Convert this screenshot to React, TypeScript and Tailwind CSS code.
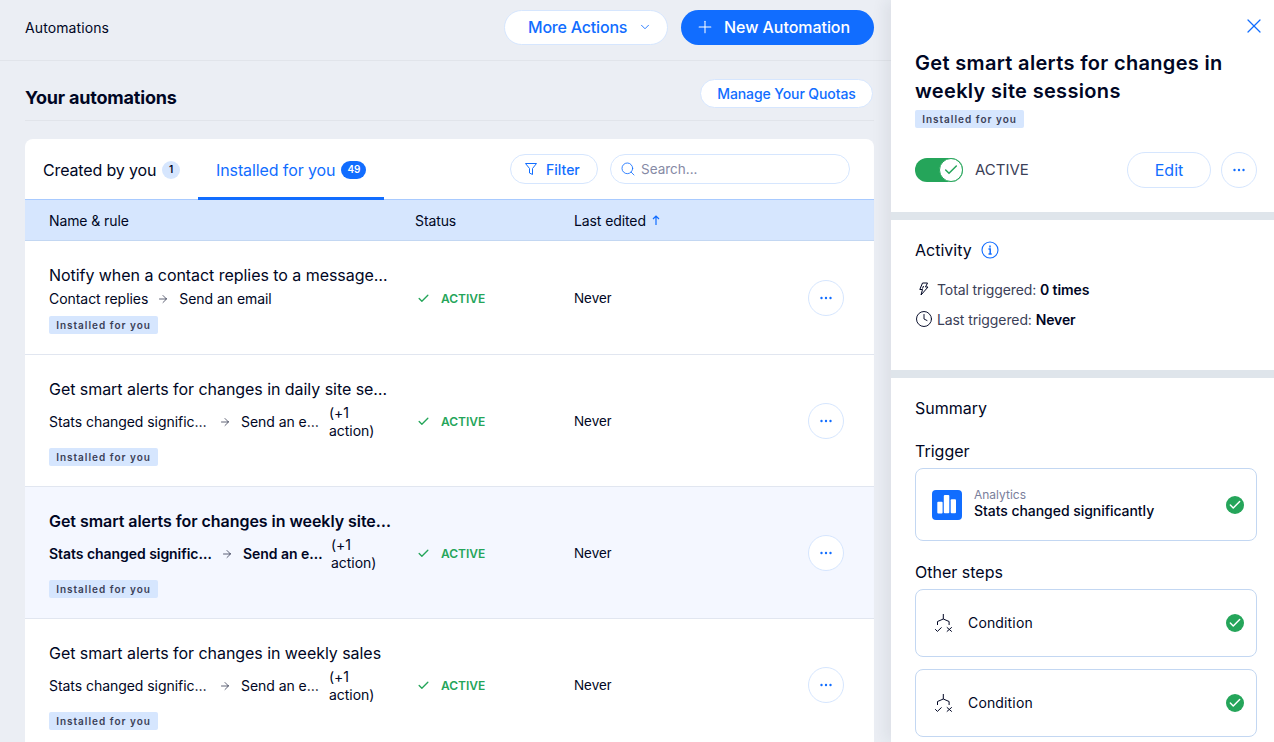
import { ArrowRight, Check, ChevronDown, Clock, Plus, Search, X } from "lucide-react";

const rows = [
  { title: "Notify when a contact replies to a message…", from: "Contact replies", to: "Send an email", extra: false, active: false },
  { title: "Get smart alerts for changes in daily site se…", from: "Stats changed signific…", to: "Send an e…", extra: true, active: false },
  { title: "Get smart alerts for changes in weekly site…", from: "Stats changed signific…", to: "Send an e…", extra: true, active: true },
  { title: "Get smart alerts for changes in weekly sales", from: "Stats changed signific…", to: "Send an e…", extra: true, active: false },
];

const Tag = () => (
  <span className="flex h-[18px] w-[109px] items-center justify-center rounded-[2px] bg-[#d6e6fe] text-[10px] font-semibold tracking-[1px] text-[#3b4057]">
    Installed for you
  </span>
);

const Dots = () => (
  <button className="flex h-9 w-9 shrink-0 items-center justify-center rounded-full border border-[#d6e6fe] bg-white">
    <svg width="14" height="4" viewBox="0 0 14 4" fill="#116dff">
      <circle cx="2.5" cy="2" r="1.2" />
      <circle cx="7" cy="2" r="1.2" />
      <circle cx="11.5" cy="2" r="1.2" />
    </svg>
  </button>
);

const GreenCheck = () => (
  <span className="flex h-[18px] w-[18px] shrink-0 items-center justify-center rounded-full bg-[#25a55a]">
    <Check className="h-[14px] w-[14px] text-white" strokeWidth={2.5} />
  </span>
);

const ConditionIcon = () => (
  <svg width="20" height="20" viewBox="0 0 20 20" fill="none" stroke="#000624" strokeWidth="1" className="shrink-0">
    <path d="M9.300 1v5M9.300 6L3.500 8.500V12M9.300 6l5.800 2.500V12" />
    <path d="M1.200 16.200l2.200 2.200 4.200-4M12.800 14.300l5 4.300M17.800 14.300l-5 4.300" />
  </svg>
);

const StepCard = ({ label }: { label: string }) => (
  <div className="flex h-[68px] items-center rounded-lg border border-[#c3d7f2] pl-[18px] pr-[12px]">
    <ConditionIcon />
    <span className="ml-[14px] flex-1 text-sm tracking-[0.15px] text-[#000624]">{label}</span>
    <GreenCheck />
  </div>
);

const App = () => {
  return (
    <div
      className="flex h-[742px] w-[1274px] overflow-hidden bg-[#ebeef4] text-[#000624]"
      style={{ fontFamily: "Inter, 'Noto Sans', sans-serif" }}
    >
      {/* Left column */}
      <div className="flex w-[891px] shrink-0 flex-col">
        <div className="flex h-[61px] shrink-0 items-center justify-between border-b border-[#e1e4ea] pl-[25px] pr-[17px] pb-[6px]">
          <span className="text-[14px] tracking-[0.1px]">Automations</span>
          <div className="flex items-center gap-[13px]">
            <button className="flex h-[35px] w-[164px] items-center gap-[11px] rounded-full border border-[#d6e6fe] bg-white pl-[23px] text-[16px] font-medium tracking-[-0.2px] text-[#116dff]">
              More Actions
              <ChevronDown className="h-[14px] w-[14px]" strokeWidth={1.5} />
            </button>
            <button className="flex h-[35px] w-[193px] items-center gap-[9px] rounded-full bg-[#116dff] pl-[14px] text-[16px] font-medium tracking-[-0.05px] text-white">
              <Plus className="h-[20px] w-[20px]" strokeWidth={1.25} />
              New Automation
            </button>
          </div>
        </div>

        <div className="flex min-h-0 flex-1 flex-col pl-[25px] pr-[17px]">
          <div className="flex h-[60px] shrink-0 items-center justify-between border-b border-[#e1e4ea] pt-[14px]">
            <h2 className="text-[18px] font-bold tracking-[-0.2px]">Your automations</h2>
            <button className="mr-[1px] -mt-[8px] flex h-[29px] w-[173px] items-center justify-center rounded-full border border-[#d6e6fe] bg-white text-[14px] font-medium tracking-[-0.1px] text-[#116dff]">
              Manage Your Quotas
            </button>
          </div>

          <div className="mt-[18px] flex min-h-0 flex-1 flex-col overflow-hidden rounded-t-lg bg-white">
            {/* Tabs */}
            <div className="flex h-[61px] shrink-0 items-stretch border-b border-[#a8caff] pl-[18px] pr-[24px]">
              <div className="flex items-center gap-[6px] pt-[1px]">
                <span className="text-[16px] tracking-[-0.15px]">Created by you</span>
                <span className="flex h-[18px] w-[18px] items-center justify-center rounded-full bg-[#d6e6fe] text-[10px] font-semibold">1</span>
              </div>
              <div className="relative ml-[18px] flex w-[186px] items-center justify-center gap-[6px] pt-[1px]">
                <span className="text-[16px] tracking-[-0.1px] text-[#116dff]">Installed for you</span>
                <span className="flex h-[18px] w-[25px] items-center justify-center rounded-full bg-[#116dff] text-[10px] font-semibold text-white">49</span>
                <span className="absolute -bottom-px left-0 right-0 h-[3px] bg-[#116dff]" />
              </div>
              <div className="ml-auto flex items-center gap-3">
                <button className="flex h-[30px] w-[88px] items-center gap-[8px] rounded-full border border-[#d6e6fe] bg-white pl-[13px] text-[14px] font-medium text-[#116dff]">
                  <svg width="14" height="14" viewBox="0 0 14 14" fill="none" stroke="#116dff" strokeWidth="1">
                    <path d="M1.500 1.500h11l-4 5v6l-3-1.500V6.500z" />
                  </svg>
                  Filter
                </button>
                <div className="flex h-[30px] w-[240px] items-center gap-[5px] rounded-full border border-[#d6e6fe] bg-white pl-[9px]">
                  <Search className="h-4 w-4 text-[#116dff]" strokeWidth={1.25} />
                  <span className="text-[13.5px] text-[#868aa5]">Search...</span>
                </div>
              </div>
            </div>

            {/* Table header */}
            <div className="flex h-[41px] shrink-0 items-center border-b border-[#c3d7f2] bg-[#d6e6fe] text-[14px] tracking-[-0.1px]">
              <span className="w-[390px] pl-[24px]">Name &amp; rule</span>
              <span className="w-[159px]">Status</span>
              <span className="flex items-center gap-[6px]">
                Last edited
                <svg width="8" height="10" viewBox="0 0 8 10" fill="none" stroke="#116dff" strokeWidth="1.2">
                  <path d="M4 10V1M1 4l3-3 3 3" />
                </svg>
              </span>
            </div>

            {/* Rows */}
            {rows.map((row) => (
              <div
                key={row.title}
                className={`flex shrink-0 items-center border-b border-[#e1e6f0] pr-[30px] ${row.active ? "bg-[#f4f7ff]" : "bg-white"}`}
              >
                <div className="w-[390px] shrink-0 pl-[24px] pt-[22px] pb-[20px]">
                  <div className={`h-6 whitespace-nowrap text-[16px] leading-6 tracking-[-0.05px] ${row.active ? "font-semibold" : "font-normal"}`}>
                    {row.title}
                  </div>
                  <div className="mt-[3px] flex items-center text-[14px] leading-[18px] tracking-[-0.05px]">
                    <span className={`whitespace-nowrap ${row.active ? "w-[162px] font-semibold" : row.extra ? "w-[160px]" : "-mr-[1px]"}`}>{row.from}</span>
                    <ArrowRight className="mx-[10px] h-3 w-3 shrink-0" strokeWidth={1.25} />
                    <span className={`whitespace-nowrap ${row.extra ? "w-[78px]" : ""} ${row.active ? "font-semibold" : ""}`}>{row.to}</span>
                    {row.extra && (
                      <span className="ml-[10px] w-[60px]">
                        (+1
                        <br />
                        action)
                      </span>
                    )}
                  </div>
                  <div className="mt-[8px]">
                    <Tag />
                  </div>
                </div>

                <div className="flex w-[159px] shrink-0 items-center pl-[2px] pt-[2px] text-[#25a55a]">
                  <Check className="h-[13px] w-[13px]" strokeWidth={2.5} />
                  <span className="ml-[11px] text-[12px] font-semibold">ACTIVE</span>
                </div>

                <span className="flex-1 pt-[2px] text-[14px]" style={{ fontFamily: "'Liberation Sans', sans-serif" }}>Never</span>
                <Dots />
              </div>
            ))}
          </div>
        </div>
      </div>

      {/* Side panel */}
      <div className="flex w-[383px] shrink-0 flex-col bg-[#dfe5eb] shadow-[-6px_0_14px_rgba(22,45,61,0.07)]">
        <section className="h-[212px] shrink-0 bg-white pl-[24px] pr-[17px]">
          <div className="-mr-[9px] flex justify-end pt-[14px]">
            <X className="h-6 w-6 text-[#116dff]" strokeWidth={1.25} />
          </div>
          <h1 className="mt-[11px] text-[20px] font-semibold leading-[28px] tracking-[0.33px]">
            Get smart alerts for changes in weekly site sessions
          </h1>
          <div className="mt-[5px]">
            <Tag />
          </div>
          <div className="mt-[24px] flex items-center">
            <span className="relative flex h-6 w-12 items-center rounded-full bg-[#25a55a]">
              <span className="absolute right-0 flex h-6 w-6 items-center justify-center rounded-full border border-[#25a55a] bg-white">
                <Check className="h-4 w-4 text-[#25a55a]" strokeWidth={2.25} />
              </span>
            </span>
            <span className="ml-[12px] text-[15px] text-[#3b4057]">ACTIVE</span>
            <button className="ml-auto flex h-9 w-[84px] items-center justify-center rounded-full border border-[#d6e6fe] bg-white text-[16px] text-[#116dff]">
              Edit
            </button>
            <span className="ml-[10px]">
              <Dots />
            </span>
          </div>
        </section>

        <section className="mt-[8px] h-[150px] shrink-0 bg-white px-[24px] pt-[19px]">
          <div className="flex items-center gap-[9px]">
            <span className="text-[16px] leading-[22px] text-[#000624]">Activity</span>
            <svg width="18" height="18" viewBox="0 0 18 18" fill="none">
              <circle cx="9" cy="9" r="8" stroke="#116dff" strokeWidth="1.1" />
              <path d="M9 4.600v1.800M7.500 8h1.700v5M7.500 13h3.200" stroke="#116dff" strokeWidth="1.500" />
            </svg>
          </div>
          <div className="mt-[13px] flex h-[30px] items-center gap-[6px] text-[14px] tracking-[-0.1px] text-[#3b4057]">
            <svg width="16" height="16" viewBox="0 0 16 16" fill="none" stroke="#000624" strokeWidth="1" className="shrink-0">
              <path d="M7.500 2h5l-2 4h2.500L6 14l1.500-5.500H4.800z" />
              <path d="M8.500 5l-1 2.500" />
            </svg>
            <span>
              Total triggered: <b className="font-semibold text-[#000624]">0 times</b>
            </span>
          </div>
          <div className="flex h-[30px] items-center gap-[4px] text-[14px] tracking-[-0.1px] text-[#3b4057]">
            <Clock className="h-[18px] w-[18px] shrink-0 text-[#000624]" strokeWidth={1.25} />
            <span>
              Last triggered: <b className="font-semibold text-[#000624]">Never</b>
            </span>
          </div>
        </section>

        <section className="mt-[8px] min-h-0 flex-1 bg-white pl-[24px] pr-[17px] pt-[19px]">
          <div className="text-[16px] leading-[22px]">Summary</div>
          <div className="mt-[21px] text-[16px] leading-[22px]">Trigger</div>
          <div className="mt-[6px] flex h-[73px] items-center rounded-lg border border-[#c3d7f2] pl-[16px] pr-[12px]">
            <span className="flex h-[30px] w-[30px] shrink-0 items-center justify-center rounded-[4px] bg-[#116dff]">
              <svg width="30" height="30" viewBox="0 0 30 30" fill="white">
                <rect x="5.300" y="11.700" width="5.300" height="11.700" rx="1" />
                <rect x="11.800" y="5" width="5.500" height="18.300" rx="1" />
                <rect x="18.700" y="9.300" width="5.300" height="14" rx="1" />
              </svg>
            </span>
            <div className="mb-[3px] ml-[12px] flex-1">
              <div className="text-[12px] leading-[15px] text-[#7a7e9b]">Analytics</div>
              <div className="text-[14px] font-medium leading-[18px] tracking-[-0.05px]">Stats changed significantly</div>
            </div>
            <GreenCheck />
          </div>
          <div className="mt-[20px] text-[16px] leading-[22px]">Other steps</div>
          <div className="mt-[6px] flex flex-col gap-3">
            <StepCard label="Condition" />
            <StepCard label="Condition" />
          </div>
        </section>
      </div>
    </div>
  );
};

export default App;
